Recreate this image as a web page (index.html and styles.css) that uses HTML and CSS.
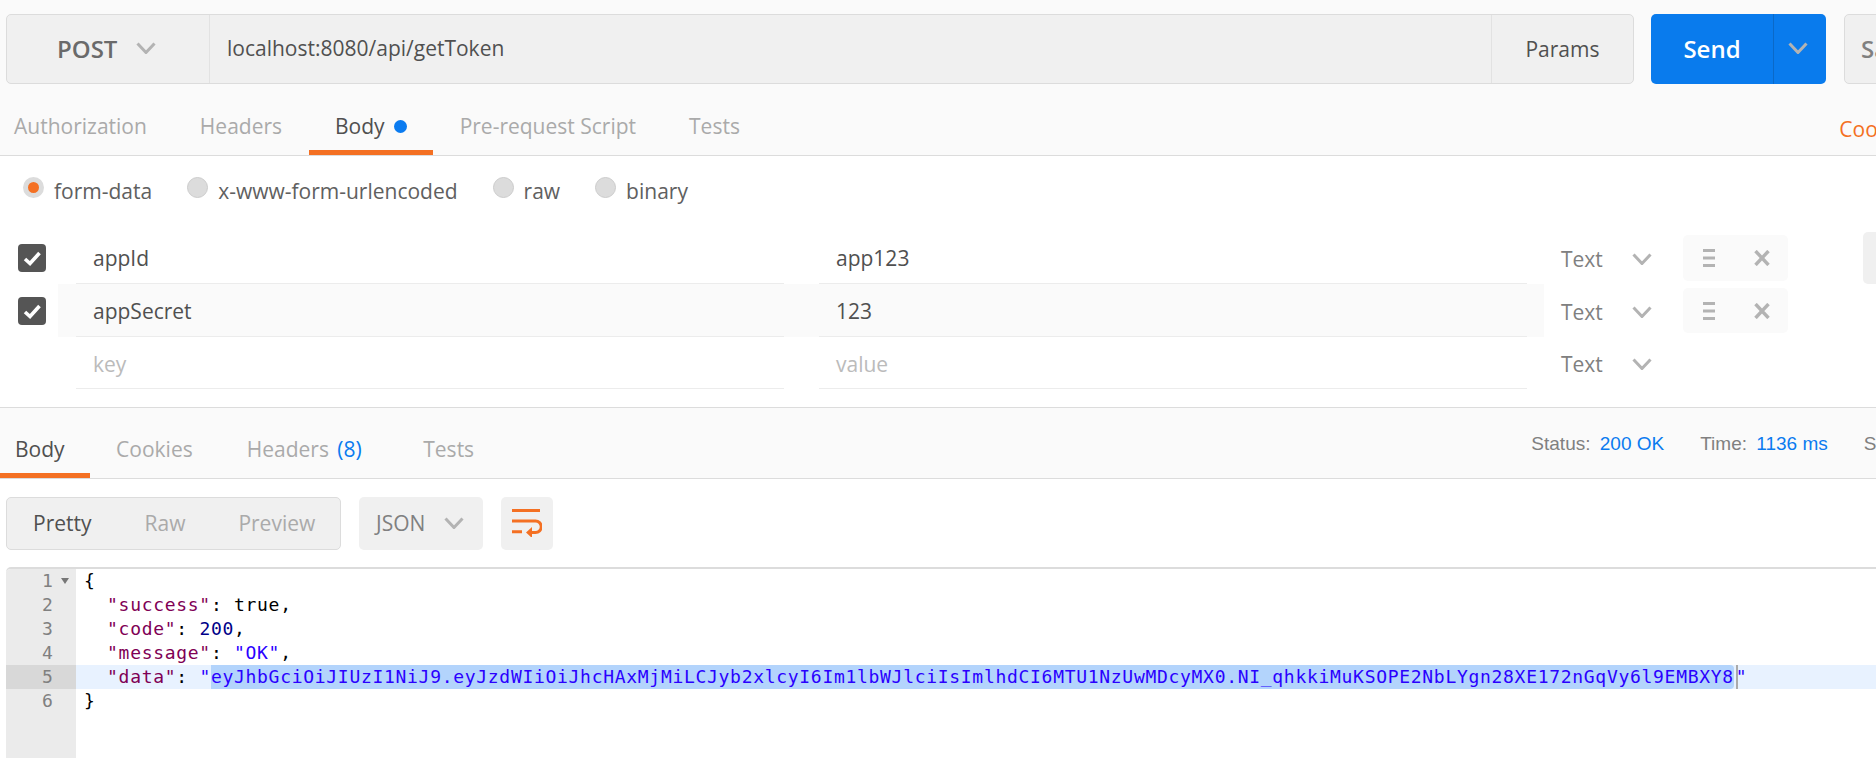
FILE: index.html
```html
<!DOCTYPE html>
<html lang="en">
<head>
<meta charset="utf-8">
<title>Postman</title>
<link rel="stylesheet" href="styles.css">
</head>
<body>
<svg class="defs" width="0" height="0" aria-hidden="true">
  <symbol id="chev" viewBox="0 0 20 12"><path d="M1.500 1.500 10 10.500 18.500 1.500" fill="none" stroke="currentColor" stroke-width="3"/></symbol>
  <symbol id="check" viewBox="0 0 28 28"><path d="M7 15l5 4.500L21.500 9" fill="none" stroke="#fff" stroke-width="3.600"/></symbol>
  <symbol id="bars" viewBox="0 0 12 18"><path d="M0 1.500h12M0 9h12M0 16.500h12" fill="none" stroke="currentColor" stroke-width="3"/></symbol>
  <symbol id="cross" viewBox="0 0 16 16"><path d="M1.500 1 14.500 15M14.500 1 1.500 15" fill="none" stroke="currentColor" stroke-width="3.400"/></symbol>
</svg>

<header class="top">
  <div class="urlrow">
    <div class="urlbar">
      <div class="method"><span>POST</span><svg class="chev"><use href="#chev"/></svg></div>
      <div class="url">localhost:8080/api/getToken</div>
      <div class="params">Params</div>
    </div>
    <div class="send"><span class="send-label">Send</span><span class="send-arrow"><svg class="chev"><use href="#chev"/></svg></span></div>
    <div class="save">Save</div>
  </div>
  <nav class="tabs">
    <span class="tab first">Authorization</span>
    <span class="tab">Headers</span>
    <span class="tab active">Body<i class="dot"></i></span>
    <span class="tab">Pre-request Script</span>
    <span class="tab">Tests</span>
    <span class="cookies">Cookies</span>
  </nav>
</header>

<section class="request">
  <div class="radios">
    <label class="radio"><i class="circle on"></i>form-data</label>
    <label class="radio"><i class="circle"></i>x-www-form-urlencoded</label>
    <label class="radio"><i class="circle"></i>raw</label>
    <label class="radio"><i class="circle"></i>binary</label>
  </div>
  <div class="row row-a">
    <svg class="checkbox"><use href="#check"/></svg>
    <div class="cells">
      <div class="cell key">appId</div>
      <div class="cell val">app123</div>
    </div>
    <div class="type">Text<svg class="chev"><use href="#chev"/></svg></div>
    <div class="actions"><svg class="bars"><use href="#bars"/></svg><svg class="cross"><use href="#cross"/></svg></div>
    <div class="bulk"></div>
  </div>
  <div class="row row-b">
    <svg class="checkbox"><use href="#check"/></svg>
    <div class="cells hover">
      <div class="cell key">appSecret</div>
      <div class="cell val">123</div>
    </div>
    <div class="type">Text<svg class="chev"><use href="#chev"/></svg></div>
    <div class="actions"><svg class="bars"><use href="#bars"/></svg><svg class="cross"><use href="#cross"/></svg></div>
  </div>
  <div class="row row-c">
    <span class="nocheck"></span>
    <div class="cells">
      <div class="cell key ph">key</div>
      <div class="cell val ph">value</div>
    </div>
    <div class="type">Text<svg class="chev"><use href="#chev"/></svg></div>
  </div>
</section>

<section class="response">
  <nav class="rtabs">
    <span class="rtab active">Body</span>
    <span class="rtab">Cookies</span>
    <span class="rtab wide">Headers <b class="count">(8)</b></span>
    <span class="rtab">Tests</span>
    <div class="meta">
      <span class="stat">Status: <b>200 OK</b></span>
      <span class="stat">Time: <b>1136 ms</b></span>
      <span class="stat">Size:</span>
    </div>
  </nav>
  <div class="toolbar">
    <div class="modes">
      <span class="mode current">Pretty</span>
      <span class="mode">Raw</span>
      <span class="mode">Preview</span>
    </div>
    <div class="format">JSON<svg class="chev"><use href="#chev"/></svg></div>
    <div class="wrap">
      <svg class="wrap-icon" viewBox="0 0 30 28"><path d="M0 1.500h28M0 12h23.500a5.750 5.750 0 0 1 0 11.500H18M0 22.700h10" fill="none" stroke="#f47023" stroke-width="3"/><path d="M20 18v11l-6-5.500z" fill="#f47023"/></svg>
    </div>
  </div>
  <div class="editor">
    <div class="gutter">
      <div class="num">1<i class="fold"></i></div>
      <div class="num">2</div>
      <div class="num">3</div>
      <div class="num">4</div>
      <div class="num now">5</div>
      <div class="num">6</div>
    </div>
    <div class="code">
      <div class="line">{</div>
      <div class="line">  <span class="k">"success"</span>: <span class="b">true</span>,</div>
      <div class="line">  <span class="k">"code"</span>: <span class="n">200</span>,</div>
      <div class="line">  <span class="k">"message"</span>: <span class="s">"OK"</span>,</div>
      <div class="line now">  <span class="k">"data"</span>: <span class="s">"<span class="sel">eyJhbGciOiJIUzI1NiJ9.eyJzdWIiOiJhcHAxMjMiLCJyb2xlcyI6Im1lbWJlciIsImlhdCI6MTU1NzUwMDcyMX0.NI_qhkkiMuKSOPE2NbLYgn28XE172nGqVy6l9EMBXY8</span><i class="caret"></i>"</span></div>
      <div class="line">}</div>
    </div>
  </div>
</section>
</body>
</html>
```
FILE: styles.css
```css
* { box-sizing: border-box; }
html, body { margin: 0; height: 100%; }
body {
  width: 1876px;
  height: 758px;
  overflow: hidden;
  background: #fff;
  color: #505050;
  font-family: "Open Sans", "Liberation Sans", sans-serif;
  font-size: 21px;
}
.defs { position: absolute; }
i, b { font-style: normal; font-weight: inherit; }
.chev { width: 20px; height: 12px; color: #b3b3b3; flex: none; display: block; }

.top {
  height: 156px;
  background: #fafafa;
  border-bottom: 1px solid #dcdcdc;
  padding: 14px 0 0 6px;
  overflow: hidden;
}
.urlrow { display: flex; height: 70px; width: 1960px; }
.urlbar {
  display: flex;
  flex: none;
  width: 1628px;
  background: #f0f0f0;
  border: 1px solid #dcdcdc;
  border-radius: 5px;
}
.method {
  width: 203px;
  border-right: 1px solid #e2e2e2;
  display: flex;
  align-items: center;
  gap: 19px;
  padding: 0 0 2px 50px;
  font-size: 24px;
  font-weight: 600;
  color: #6a6a6a;
}
.url { flex: 1; display: flex; align-items: center; padding: 0 0 3px 17px; color: #505050; }
.params {
  width: 142px;
  border-left: 1px solid #e2e2e2;
  display: flex;
  align-items: center;
  justify-content: center;
  color: #505050;
}
.send {
  display: flex;
  flex: none;
  width: 175px;
  margin-left: 17px;
  background: #097bed;
  border-radius: 5px;
  color: #fff;
  font-size: 24px;
  font-weight: 600;
}
.send-label { width: 122px; display: flex; align-items: center; justify-content: center; padding-bottom: 2px; }
.send-arrow { flex: 1; border-left: 1px solid #0a69c8; display: flex; align-items: center; justify-content: center; padding: 0 4px 2px 0; }
.save {
  flex: none;
  width: 120px;
  margin-left: 18px;
  background: #f0f0f0;
  border: 1px solid #dcdcdc;
  border-radius: 5px;
  padding: 0 0 2px 16px;
  display: flex;
  align-items: center;
  font-size: 24px;
  font-weight: 600;
  color: #808080;
}

.tabs { display: flex; align-items: stretch; height: 71px; margin-left: -6px; width: 1876px; }
.tab {
  display: flex;
  align-items: center;
  gap: 9px;
  height: 71px;
  padding: 18px 26.500px 0;
  color: #aaa;
  border-bottom: 5px solid transparent;
}
.tab.first { padding-left: 14px; }
.tab.active { color: #505050; border-bottom-color: #f47023; }
.dot { width: 13px; height: 13px; border-radius: 50%; background: #0a7bf0; }
.cookies { margin-left: auto; margin-right: -40px; align-self: center; padding-top: 18px; color: #f47023; }

.request { height: 252px; overflow: hidden; border-bottom: 1px solid #dcdcdc; }
.radios { display: flex; height: 75px; padding: 0 0 5px 23px; align-items: center; gap: 35px; }
.radio { display: flex; align-items: center; gap: 10px; color: #606060; }
.circle { width: 21px; height: 21px; border-radius: 50%; background: #dcdcdc; border: 1px solid #ccc; margin-top: -7px; }
.circle.on { background: #f47023; border: 5px solid #dcdcdc; }

.row { display: flex; align-items: center; width: 1960px; }
.row-a { height: 53px; }
.row-b { height: 53px; }
.row-c { height: 52px; }
.checkbox { width: 28px; height: 28px; margin-left: 18px; background: #555; border-radius: 4px; flex: none; }
.nocheck { width: 28px; margin-left: 18px; flex: none; }
.cells { display: flex; flex: none; align-self: stretch; width: 1486px; margin-left: 12px; padding-left: 18px; gap: 35px; }
.cells.hover { background: #fafafa; }
.cell { width: 708px; display: flex; align-items: center; padding: 2px 0 0 17px; border-bottom: 1px solid #ececec; color: #505050; }
.ph { color: #bbb; }
.type { display: flex; align-items: center; width: 139px; padding: 2px 0 0 17px; gap: 29px; color: #808080; flex: none; }
.actions {
  display: flex;
  align-items: center;
  width: 105px;
  height: 46px;
  padding-left: 20px;
  gap: 39px;
  background: #fafafa;
  border-radius: 5px;
  color: #b3b3b3;
  flex: none;
}
.row-b .actions { height: 45px; }
.bars { width: 12px; height: 18px; }
.cross { width: 16px; height: 16px; }
.bulk { width: 60px; height: 52px; margin-left: 75px; background: #f0f0f0; border-radius: 5px; flex: none; }

.rtabs { display: flex; height: 71px; background: #fafafa; border-bottom: 1px solid #dcdcdc; width: 1876px; overflow: hidden; }
.rtab {
  display: flex;
  align-items: center;
  white-space: pre;
  padding: 17px 26.500px 0;
  height: 70px;
  color: #aaa;
  border-bottom: 5px solid transparent;
}
.rtab.wide { padding-left: 27.500px; padding-right: 35px; }
.rtab.active { color: #505050; border-bottom-color: #f47023; padding-left: 15px; padding-right: 25px; }
.count { color: #0a7bf0; margin-left: 3px; }
.meta {
  display: flex;
  gap: 36px;
  margin-left: auto;
  margin-right: -30px;
  padding-top: 14px;
  height: 58px;
  align-items: center;
  font-family: "Liberation Sans", sans-serif;
  font-size: 19px;
  color: #808080;
  white-space: pre;
}
.stat b { color: #0a7bf0; margin-left: 4px; }

.toolbar { display: flex; align-items: center; height: 88px; padding: 0 0 0 6px; gap: 18px; }
.modes, .format, .wrap { height: 53px; background: #f0f0f0; border-radius: 5px; display: flex; align-items: center; }
.modes { width: 335px; border: 1px solid #dcdcdc; padding-left: 26px; gap: 53px; }
.mode { color: #aaa; }
.mode.current { color: #505050; }
.format { width: 124px; padding-left: 17px; gap: 19px; color: #808080; }
.wrap { width: 52px; justify-content: center; }
.wrap-icon { width: 30px; height: 28px; }

.editor {
  display: flex;
  height: 191px;
  margin-left: 6px;
  border-top: 2px solid #dcdcdc;
  border-top-left-radius: 5px;
  font-family: "DejaVu Sans Mono", monospace;
  font-size: 18px;
  letter-spacing: 0.700px;
  overflow: hidden;
}
.gutter { width: 70px; background: #ebebeb; flex: none; color: #808080; }
.num { height: 24px; line-height: 24px; padding-left: 36px; display: flex; align-items: center; gap: 7px; }
.num.now { background: #d8d8d8; }
.fold { width: 0; height: 0; border: 4.500px solid transparent; border-top: 6px solid #777; border-bottom: 0; }
.code { flex: 1; min-width: 0; }
.line { height: 24px; line-height: 24px; padding-left: 8px; white-space: pre; color: #000; }
.line.now { background: #e8f2ff; }
.k { color: #7f0055; }
.b { color: #000; }
.n { color: #000088; }
.s { color: #2a00ff; }
.sel { display: inline-block; height: 24px; background: #b3d4fc; border-radius: 0 4px 4px 0; }
.caret { display: inline-block; width: 2px; height: 24px; background: #aaa; margin-left: 2px; margin-right: -2px; vertical-align: top; }
```
